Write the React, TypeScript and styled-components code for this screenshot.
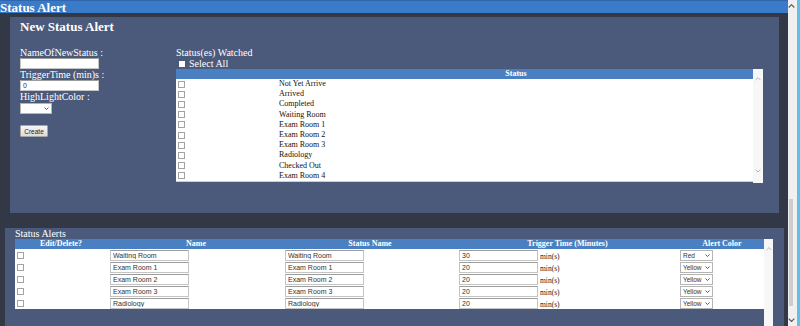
import styled, { createGlobalStyle } from "styled-components";

const GlobalStyle = createGlobalStyle`
  html, body {
    margin: 0;
    padding: 0;
    background: #323846;
    overflow: hidden;
  }
  * {
    box-sizing: border-box;
  }
`;

const watched = [
  "Not Yet Arrive",
  "Arrived",
  "Completed",
  "Waiting Room",
  "Exam Room 1",
  "Exam Room 2",
  "Exam Room 3",
  "Radiology",
  "Checked Out",
  "Exam Room 4",
];

const alerts = [
  { name: "Waiting Room", status: "Waiting Room", time: "30", color: "Red" },
  { name: "Exam Room 1", status: "Exam Room 1", time: "20", color: "Yellow" },
  { name: "Exam Room 2", status: "Exam Room 2", time: "20", color: "Yellow" },
  { name: "Exam Room 3", status: "Exam Room 3", time: "20", color: "Yellow" },
  { name: "Radiology", status: "Radiology", time: "20", color: "Yellow" },
];

const Chevron = ({ up, color = "#b5b5b5", size = 6 }: { up?: boolean; color?: string; size?: number }) => (
  <svg width={size} height={size * 0.6} viewBox="0 0 10 6">
    <path
      d={up ? "M1 5 L5 1 L9 5" : "M1 1 L5 5 L9 1"}
      fill="none"
      stroke={color}
      strokeWidth="1.6"
    />
  </svg>
);

const App = () => {
  return (
    <>
      <GlobalStyle />
      <Page>
        <Main>
          <TopBar>Status Alert</TopBar>
          <Content>
            <NewPanel>
              <PanelTitle>New Status Alert</PanelTitle>
              <NewBody>
                <Form>
                  <Label>NameOfNewStatus :</Label>
                  <TextBox $width={79} defaultValue="" />
                  <Label>TriggerTime (min)s :</Label>
                  <TextBox $width={79} defaultValue="0" />
                  <Label>HighLightColor :</Label>
                  <FakeSelect $width={32}>
                    <span></span>
                    <Chevron color="#333" size={5} />
                  </FakeSelect>
                  <CreateButton>Create</CreateButton>
                </Form>
                <Watched>
                  <Label>Status(es) Watched</Label>
                  <SelectAll>
                    <WhiteSquare />
                    Select All
                  </SelectAll>
                  <ListBox $height={114}>
                    <ListTable>
                      <thead>
                        <tr>
                          <HeadCell $width={103}></HeadCell>
                          <HeadCell>Status</HeadCell>
                        </tr>
                      </thead>
                      <tbody>
                        {watched.map((s) => (
                          <WatchRow key={s}>
                            <CheckCell>
                              <Check type="checkbox" />
                            </CheckCell>
                            <StatusCell>{s}</StatusCell>
                          </WatchRow>
                        ))}
                      </tbody>
                    </ListTable>
                    <InnerScroll $width={10}>
                      <Chevron up />
                      <Chevron />
                    </InnerScroll>
                  </ListBox>
                </Watched>
              </NewBody>
            </NewPanel>

            <AlertsPanel>
              <Label>Status Alerts</Label>
              <ListBox $height={140}>
                <AlertTableWrap>
                  <AlertTable>
                    <thead>
                      <tr>
                        <HeadCell $width={92}>Edit/Delete?</HeadCell>
                        <HeadCell $width={178}>Name</HeadCell>
                        <HeadCell $width={170}>Status Name</HeadCell>
                        <HeadCell $width={225}>Trigger Time (Minutes)</HeadCell>
                        <HeadCell $width={84}>Alert Color</HeadCell>
                      </tr>
                    </thead>
                    <tbody>
                      {alerts.map((a) => (
                        <AlertRow key={a.name}>
                          <AlertCell $pad={2}>
                            <Check type="checkbox" />
                          </AlertCell>
                          <AlertCell $pad={3}>
                            <TextBox $width={79} defaultValue={a.name} />
                          </AlertCell>
                          <AlertCell $pad={0}>
                            <TextBox $width={79} defaultValue={a.status} />
                          </AlertCell>
                          <AlertCell $pad={4}>
                            <TimeWrap>
                              <TextBox $width={79} defaultValue={a.time} />
                              <Unit>min(s)</Unit>
                            </TimeWrap>
                          </AlertCell>
                          <AlertCell $pad={0}>
                            <FakeSelect $width={33}>
                              <span>{a.color}</span>
                              <Chevron color="#333" size={5} />
                            </FakeSelect>
                          </AlertCell>
                        </AlertRow>
                      ))}
                    </tbody>
                  </AlertTable>
                </AlertTableWrap>
                <InnerScroll $width={9}>
                  <Chevron up />
                  <span />
                </InnerScroll>
              </ListBox>
            </AlertsPanel>
          </Content>
        </Main>
        <PageScroll>
          <Chevron up color="#555" size={7} />
          <Track>
            <Thumb $top={188} />
          </Track>
          <Chevron color="#555" size={7} />
        </PageScroll>
      </Page>
    </>
  );
};
export default App;

const Page = styled.div`
  display: flex;
  width: 800px;
  height: 326px;
  overflow: hidden;
`;

const Main = styled.div`
  flex: 1;
  display: flex;
  flex-direction: column;
  min-width: 0;
`;

const TopBar = styled.div`
  height: 13px;
  flex-shrink: 0;
  background: #3a7bc9;
  border-top: 1px solid #2f66ad;
  color: #fff;
  font-family: "Liberation Serif", serif;
  font-weight: bold;
  font-size: 13px;
  line-height: 14px;
  white-space: nowrap;
`;

const Content = styled.div`
  flex: 1;
  padding-top: 4px;
  background: #323846;
`;

const NewPanel = styled.div`
  height: 196px;
  margin: 0 9px 0 10px;
  padding: 2px 10px 0 10px;
  background: #4b5a7b;
`;

const PanelTitle = styled.div`
  color: #fff;
  font-family: "Liberation Serif", serif;
  font-weight: bold;
  font-size: 13px;
  line-height: 15px;
`;

const NewBody = styled.div`
  display: flex;
  margin-top: 13px;
`;

const Form = styled.div`
  width: 156px;
  display: flex;
  flex-direction: column;
  align-items: flex-start;
`;

const Label = styled.div`
  color: #fff;
  font-family: "Liberation Serif", serif;
  font-size: 10px;
  line-height: 11px;
  white-space: nowrap;
`;

const TextBox = styled.input<{ $width: number }>`
  width: ${(p) => p.$width}px;
  height: 11px;
  margin: 0;
  padding: 0 0 0 2px;
  background: #fff;
  border: 1px solid #c4c4c4;
  border-top-color: #9c9c9c;
  font-family: "Liberation Sans", sans-serif;
  font-size: 7px;
  color: #333;
  outline: none;
`;

const FakeSelect = styled.div<{ $width: number }>`
  width: ${(p) => p.$width}px;
  height: 11px;
  display: flex;
  align-items: center;
  justify-content: space-between;
  padding: 0 2px 0 2px;
  margin-top: 1px;
  background: #fff;
  border: 1px solid #b5b5b5;
  font-family: "Liberation Sans", sans-serif;
  font-size: 6.5px;
  line-height: 9px;
  color: #333;
`;

const CreateButton = styled.button`
  margin-top: 11px;
  width: 28px;
  height: 12px;
  padding: 0;
  background: linear-gradient(#f6f6f6, #dcdcdc);
  border: 1px solid #a6a6a6;
  border-radius: 1px;
  font-family: "Liberation Sans", sans-serif;
  font-size: 6.5px;
  color: #222;
`;

const Watched = styled.div`
  width: 587px;
  display: flex;
  flex-direction: column;
`;

const SelectAll = styled.div`
  display: flex;
  align-items: center;
  gap: 4px;
  padding-left: 3px;
  color: #fff;
  font-family: "Liberation Serif", serif;
  font-size: 10px;
  line-height: 11px;
`;

const WhiteSquare = styled.span`
  width: 6px;
  height: 6px;
  background: #fff;
`;

const ListBox = styled.div<{ $height: number }>`
  display: flex;
  height: ${(p) => p.$height}px;
  align-items: flex-start;
`;

const ListTable = styled.table`
  width: 577px;
  border-collapse: collapse;
  background: #fff;
  border-bottom: 1px solid #c9cdd6;
  table-layout: fixed;
`;

const HeadCell = styled.th<{ $width?: number }>`
  ${(p) => (p.$width ? `width: ${p.$width}px;` : "")}
  height: 10px;
  padding: 0;
  background: #4a7fc1;
  color: #fff;
  font-family: "Liberation Serif", serif;
  font-weight: bold;
  font-size: 8px;
  line-height: 10px;
  text-align: center;
  white-space: nowrap;
`;

const WatchRow = styled.tr`
  height: 10.2px;
`;

const CheckCell = styled.td`
  padding: 0 0 0 2px;
  height: 10.2px;
  line-height: 0;
  vertical-align: middle;
`;

const StatusCell = styled.td`
  padding: 0;
  height: 10.2px;
  font-family: "Liberation Serif", serif;
  font-size: 8px;
  line-height: 10px;
  color: #111;
  white-space: nowrap;
`;

const Check = styled.input`
  appearance: none;
  width: 7px;
  height: 7px;
  margin: 0;
  background: #fff;
  border: 1px solid #a3a3a3;
  vertical-align: middle;
`;

const InnerScroll = styled.div<{ $width: number }>`
  width: ${(p) => p.$width}px;
  align-self: stretch;
  display: flex;
  flex-direction: column;
  align-items: center;
  justify-content: space-between;
  padding: 8px 0 10px;
  background: #f7f7f8;
`;

const AlertsPanel = styled.div`
  height: 240px;
  margin: 15px 4px 0 5px;
  padding: 0 11px 0 10px;
  background: #4b5a7b;
`;

const AlertTableWrap = styled.div`
  width: 749px;
`;

const AlertTable = styled.table`
  width: 749px;
  border-collapse: collapse;
  table-layout: fixed;
`;

const AlertRow = styled.tr`
  height: 12px;
  background: #fff;
`;

const AlertCell = styled.td<{ $pad: number }>`
  height: 12px;
  padding: 0 0 0 ${(p) => p.$pad}px;
  line-height: 0;
  vertical-align: middle;
`;

const TimeWrap = styled.div`
  display: flex;
  align-items: flex-end;
  gap: 2px;
`;

const Unit = styled.span`
  font-family: "Liberation Serif", serif;
  font-size: 7.5px;
  line-height: 9px;
  color: #222;
`;

const PageScroll = styled.div`
  width: 12px;
  flex-shrink: 0;
  display: flex;
  flex-direction: column;
  align-items: center;
  padding: 4px 3px 4px 0;
  background: #f0f0f0;
  border-right: 3px solid #5cc2ea;
`;

const Track = styled.div`
  flex: 1;
  width: 100%;
  padding: 0 1px;
  margin: 3px 0;
`;

const Thumb = styled.div<{ $top: number }>`
  margin-top: ${(p) => p.$top}px;
  height: 107px;
  background: #cdcdcd;
`;
